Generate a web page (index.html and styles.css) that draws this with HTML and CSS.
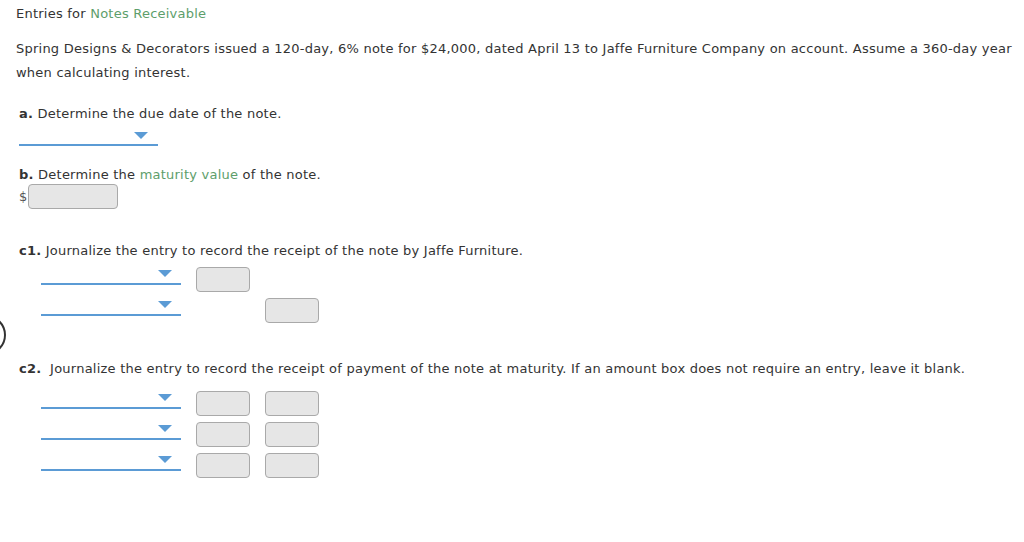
FILE: index.html
```html
<!DOCTYPE html>
<html lang="en">
<head>
    <meta charset="UTF-8">
    <title>Entries for Notes Receivable</title>
    <link rel="stylesheet" href="styles.css">
</head>
<body>

<div class="edge-circle"></div>

<div class="page">
    <div class="title">Entries for <span class="term">Notes Receivable</span></div>

    <p class="intro">Spring Designs &amp; Decorators issued a 120-day, 6% note for $24,000, dated April 13 to Jaffe Furniture Company on account. Assume a 360-day year when calculating interest.</p>

    <!-- a -->
    <div class="part part-a">
        <div class="question"><b>a.</b> Determine the due date of the note.</div>
        <div class="dropdown"><span class="caret"></span></div>
    </div>

    <!-- b -->
    <div class="part part-b">
        <div class="question"><b>b.</b> Determine the <span class="term">maturity value</span> of the note.</div>
        <div class="amount-row">
            <span class="dollar">$</span>
            <input type="text" class="amount amount-wide">
        </div>
    </div>

    <!-- c1 -->
    <div class="part part-c1">
        <div class="question"><b>c1.</b> Journalize the entry to record the receipt of the note by Jaffe Furniture.</div>
        <div class="journal">
            <div class="dropdown"><span class="caret"></span></div>
            <input type="text" class="amount">
            <span></span>

            <div class="dropdown"><span class="caret"></span></div>
            <span></span>
            <input type="text" class="amount">
        </div>
    </div>

    <!-- c2 -->
    <div class="part part-c2">
        <div class="question"><b>c2.</b>&nbsp; Journalize the entry to record the receipt of payment of the note at maturity. If an amount box does not require an entry, leave it blank.</div>
        <div class="journal">
            <div class="dropdown"><span class="caret"></span></div>
            <input type="text" class="amount">
            <input type="text" class="amount">

            <div class="dropdown"><span class="caret"></span></div>
            <input type="text" class="amount">
            <input type="text" class="amount">

            <div class="dropdown"><span class="caret"></span></div>
            <input type="text" class="amount">
            <input type="text" class="amount">
        </div>
    </div>
</div>

</body>
</html>
```

FILE: styles.css
```css
body {
    margin: 0;
    font-family: "DejaVu Sans", Verdana, sans-serif;
    font-size: 13px;
    letter-spacing: 0.23px;
    color: #333;
    background: #fff;
}
.page {
    padding: 4px 16px 0 16px;
    width: 1000px;
}
.title {
    line-height: 20px;
}
.term {
    color: #5d9e6b;
}
.intro {
    margin: 13px 0 0 0;
    line-height: 24px;
}
.part {
    padding-left: 3px;
}
.question {
    line-height: 20px;
}
.question b {
    font-weight: bold;
}
.part-a {
    margin-top: 19px;
}
.part-b {
    margin-top: 19px;
}
.part-c1 {
    margin-top: 32px;
}
.part-c2 {
    margin-top: 36px;
}

/* dropdown with underline */
.dropdown {
    width: 139px;
    height: 22px;
    border-bottom: 2px solid #5b9bd5;
    display: flex;
    justify-content: flex-end;
    align-items: center;
    padding-right: 10px;
    box-sizing: border-box;
}
.caret {
    width: 0;
    height: 0;
    border-left: 7px solid transparent;
    border-right: 7px solid transparent;
    border-top: 7px solid #5b9bd5;
    margin-top: 2px;
}

/* amount inputs */
.amount {
    width: 54px;
    height: 25px;
    box-sizing: border-box;
    border: 1px solid #a9a9a9;
    border-radius: 4px;
    background: #e6e6e6;
    padding: 0;
    margin: 0;
    font: inherit;
}
.amount-row {
    display: flex;
    align-items: center;
    margin-top: -1px;
}
.dollar {
    width: 9px;
    color: #555;
}
.amount-wide {
    width: 90px;
}

/* journal grid */
.journal {
    display: grid;
    grid-template-columns: 140px 54px 54px;
    grid-auto-rows: 31px;
    column-gap: 15px;
    margin-left: 22px;
    margin-top: 0;
}
.journal .dropdown {
    width: 140px;
    height: 24px;
    padding-right: 9px;
}
.journal .amount {
    margin-top: 6px;
}
.part-c2 .journal {
    margin-top: 6px;
}

.edge-circle {
    position: absolute;
    left: -34px;
    top: 315px;
    width: 36px;
    height: 36px;
    border: 2.5px solid #333;
    border-radius: 50%;
}
```
